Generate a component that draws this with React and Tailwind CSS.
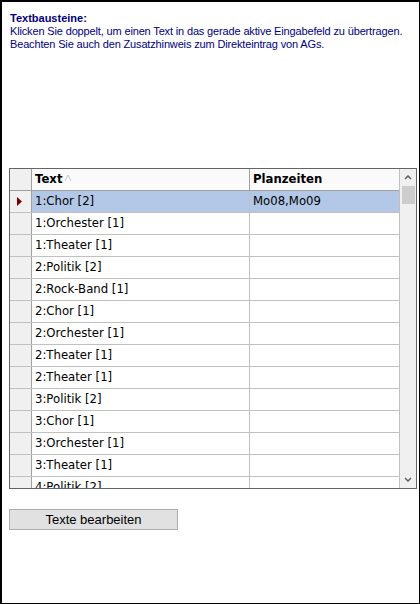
import React from 'react';

const rows = [
  { text: '1:Chor [2]', plan: 'Mo08,Mo09', selected: true },
  { text: '1:Orchester [1]', plan: '' },
  { text: '1:Theater [1]', plan: '' },
  { text: '2:Politik [2]', plan: '' },
  { text: '2:Rock-Band [1]', plan: '' },
  { text: '2:Chor [1]', plan: '' },
  { text: '2:Orchester [1]', plan: '' },
  { text: '2:Theater [1]', plan: '' },
  { text: '2:Theater [1]', plan: '' },
  { text: '3:Politik [2]', plan: '' },
  { text: '3:Chor [1]', plan: '' },
  { text: '3:Orchester [1]', plan: '' },
  { text: '3:Theater [1]', plan: '' },
  { text: '4:Politik [2]', plan: '' },
];

const cellFont = { fontFamily: '"DejaVu Sans", Verdana, sans-serif' };

const App = () => {
  return (
    <div
      className="w-[420px] h-[604px] bg-white border-l-2 border-t-2 border-r border-b border-black flex flex-col overflow-hidden"
      style={{ fontFamily: '"Liberation Sans", Arial, sans-serif' }}
    >
      <div className="pl-2 pt-[10px] text-[11px] leading-[13px] tracking-[-0.15px] text-[#000080]">
        <div className="font-bold tracking-normal">Textbausteine:</div>
        <div>Klicken Sie doppelt, um einen Text in das gerade aktive Eingabefeld zu übertragen.</div>
        <div>Beachten Sie auch den Zusatzhinweis zum Direkteintrag von AGs.</div>
      </div>

      {/* grid */}
      <div className="ml-[7px] mt-[117px] w-[408px] h-[321px] border border-[#646464] flex overflow-hidden">
        <div className="flex-1 flex flex-col overflow-hidden text-[11.7px] text-black" style={cellFont}>
          <div className="flex h-[22px] shrink-0 border-b border-[#a0a0a0] bg-[#fafafa]">
            <div className="w-[22px] border-r border-[#a0a0a0] bg-[#f0f0f0]" />
            <div className="w-[218px] border-r border-[#a0a0a0] flex items-center pl-[3px] font-bold">
              Text
              <svg width="8" height="8" viewBox="0 0 8 8" className="ml-[2px] -mt-[4px]">
                <path d="M1 7 L4 1 L7 7" fill="none" stroke="#c8c8c8" strokeWidth="1" />
              </svg>
            </div>
            <div className="flex-1 flex items-center pl-[3px] font-bold">Planzeiten</div>
          </div>
          {rows.map((r, i) => (
            <div key={i} className="flex h-[22px] shrink-0 border-b border-[#c0c0c0]">
              <div className="w-[22px] border-r border-[#a0a0a0] bg-[#f0f0f0] flex items-center pl-[7px]">
                {r.selected && (
                  <svg width="6" height="9" viewBox="0 0 6 9">
                    <path d="M0 0 L5 4.5 L0 9 Z" fill="#800000" />
                  </svg>
                )}
              </div>
              <div
                className={`w-[218px] border-r border-[#c0c0c0] flex items-center pl-[3px] ${r.selected ? 'bg-[#b3c8e6]' : ''}`}
              >
                {r.text}
              </div>
              <div className={`flex-1 flex items-center pl-[3px] ${r.selected ? 'bg-[#b3c8e6]' : ''}`}>{r.plan}</div>
            </div>
          ))}
        </div>
        {/* scrollbar */}
        <div className="w-[17px] shrink-0 border-l border-[#c0c0c0] bg-[#f0f0f0] flex flex-col items-center">
          <div className="h-[17px] flex items-center justify-center">
            <svg width="8" height="5" viewBox="0 0 8 5">
              <path d="M1 4 L4 1 L7 4" fill="none" stroke="#606060" strokeWidth="1.5" />
            </svg>
          </div>
          <div className="w-[13px] h-[18px] bg-[#cdcdcd]" />
          <div className="flex-1" />
          <div className="h-[17px] flex items-center justify-center">
            <svg width="8" height="5" viewBox="0 0 8 5">
              <path d="M1 1 L4 4 L7 1" fill="none" stroke="#606060" strokeWidth="1.5" />
            </svg>
          </div>
        </div>
      </div>

      <div className="ml-[7px] mt-[20px]">
        <button className="w-[169px] h-[21px] border border-[#adadad] bg-[#e1e1e1] text-[13px] text-black flex items-center justify-center">
          Texte bearbeiten
        </button>
      </div>
    </div>
  );
};

export default App;
